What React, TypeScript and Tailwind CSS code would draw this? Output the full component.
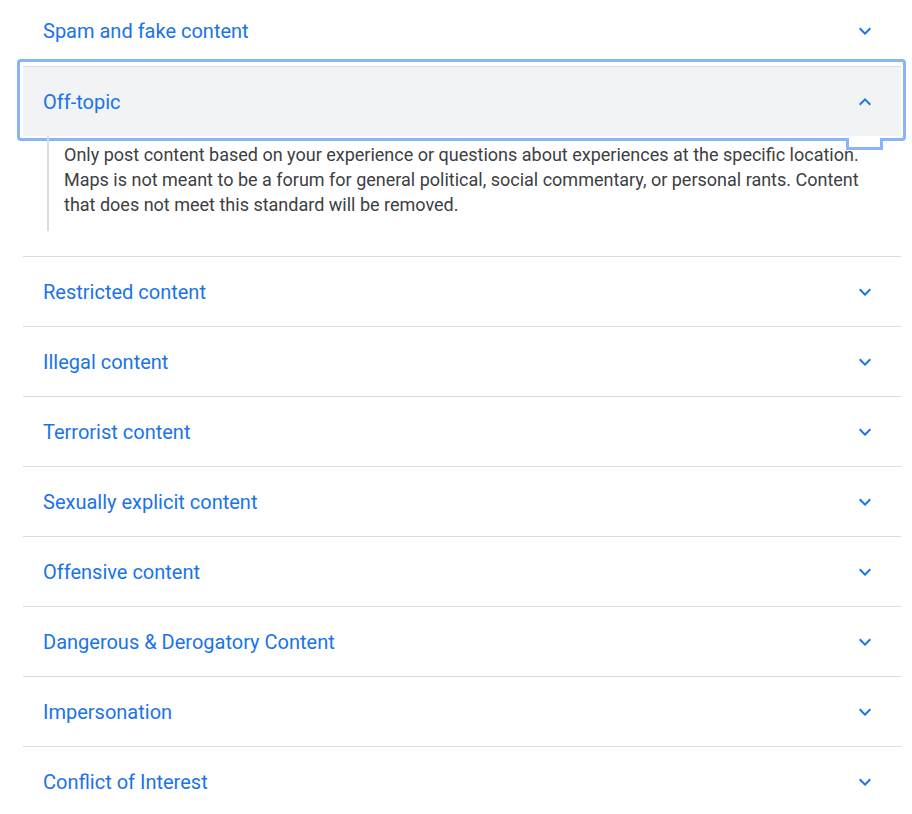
const items = [
  'Restricted content',
  'Illegal content',
  'Terrorist content',
  'Sexually explicit content',
  'Offensive content',
  'Dangerous & Derogatory Content',
  'Impersonation',
  'Conflict of Interest'
]

function ExpandMore() {
  return (
    <svg width="24" height="24" viewBox="0 0 24 24" className="fill-[#1a73e8]">
      <path d="M16.59 8.59L12 13.17 7.41 8.59 6 10l6 6 6-6z" />
    </svg>
  )
}

function ExpandLess() {
  return (
    <svg width="24" height="24" viewBox="0 0 24 24" className="fill-[#1a73e8]">
      <path d="M12 8l-6 6 1.41 1.41L12 10.83l4.59 4.58L18 14z" />
    </svg>
  )
}

function Row({ title, first }: { title: string; first?: boolean }) {
  return (
    <div
      className={`flex h-[70px] items-center justify-between pl-[20px] pr-[24px] ${
        first ? '' : 'border-t border-[#dadce0]'
      }`}
    >
      <span className="text-[20px] text-[#1a73e8]">{title}</span>
      <ExpandMore />
    </div>
  )
}

export default function App() {
  return (
    <div
      className="h-[814px] overflow-hidden bg-white"
      style={{ fontFamily: 'Roboto, "Noto Sans", Arial, sans-serif' }}
    >
      <div className="relative -mt-[4px] ml-[23px] w-[878px]">
        <Row title="Spam and fake content" first />

        <div className="flex h-[70px] items-center justify-between border-t border-[#dadce0] bg-[#f1f3f4] pl-[20px] pr-[24px]">
          <span className="text-[20px] text-[#1a73e8]">Off-topic</span>
          <ExpandLess />
        </div>

        <div className="h-[120px]">
          <div className="ml-[24px] mr-[24px] border-l-2 border-[#dadce0] pb-[14px] pl-[15px] pt-[6px] text-[18px] leading-[25px] text-[#3c4043]">
            Only post content based on your experience or questions about experiences at the specific location.
            Maps is not meant to be a forum for general political, social commentary, or personal rants. Content
            that does not meet this standard will be removed.
          </div>
        </div>

        {items.map((t) => (
          <Row key={t} title={t} />
        ))}

        {/* focus ring round the open header */}
        <svg
          className="pointer-events-none absolute left-[-23px] top-0"
          width="912"
          height="160"
          viewBox="0 -4 912 160"
        >
          <path
            d="M21 60.5 H902 Q904.5 60.5 904.5 63 V137 Q904.5 139.5 902 139.5 H881.5 V148.5 H847.5 V139.5 H21 Q18.5 139.5 18.5 137 V63 Q18.5 60.5 21 60.5 Z"
            fill="none"
            stroke="#8ab4f8"
            strokeWidth="3"
          />
        </svg>
        <div className="pointer-events-none absolute left-[24px] top-[140px] h-[95px] w-[2px] bg-[#dadce0]" />
      </div>
    </div>
  )
}
